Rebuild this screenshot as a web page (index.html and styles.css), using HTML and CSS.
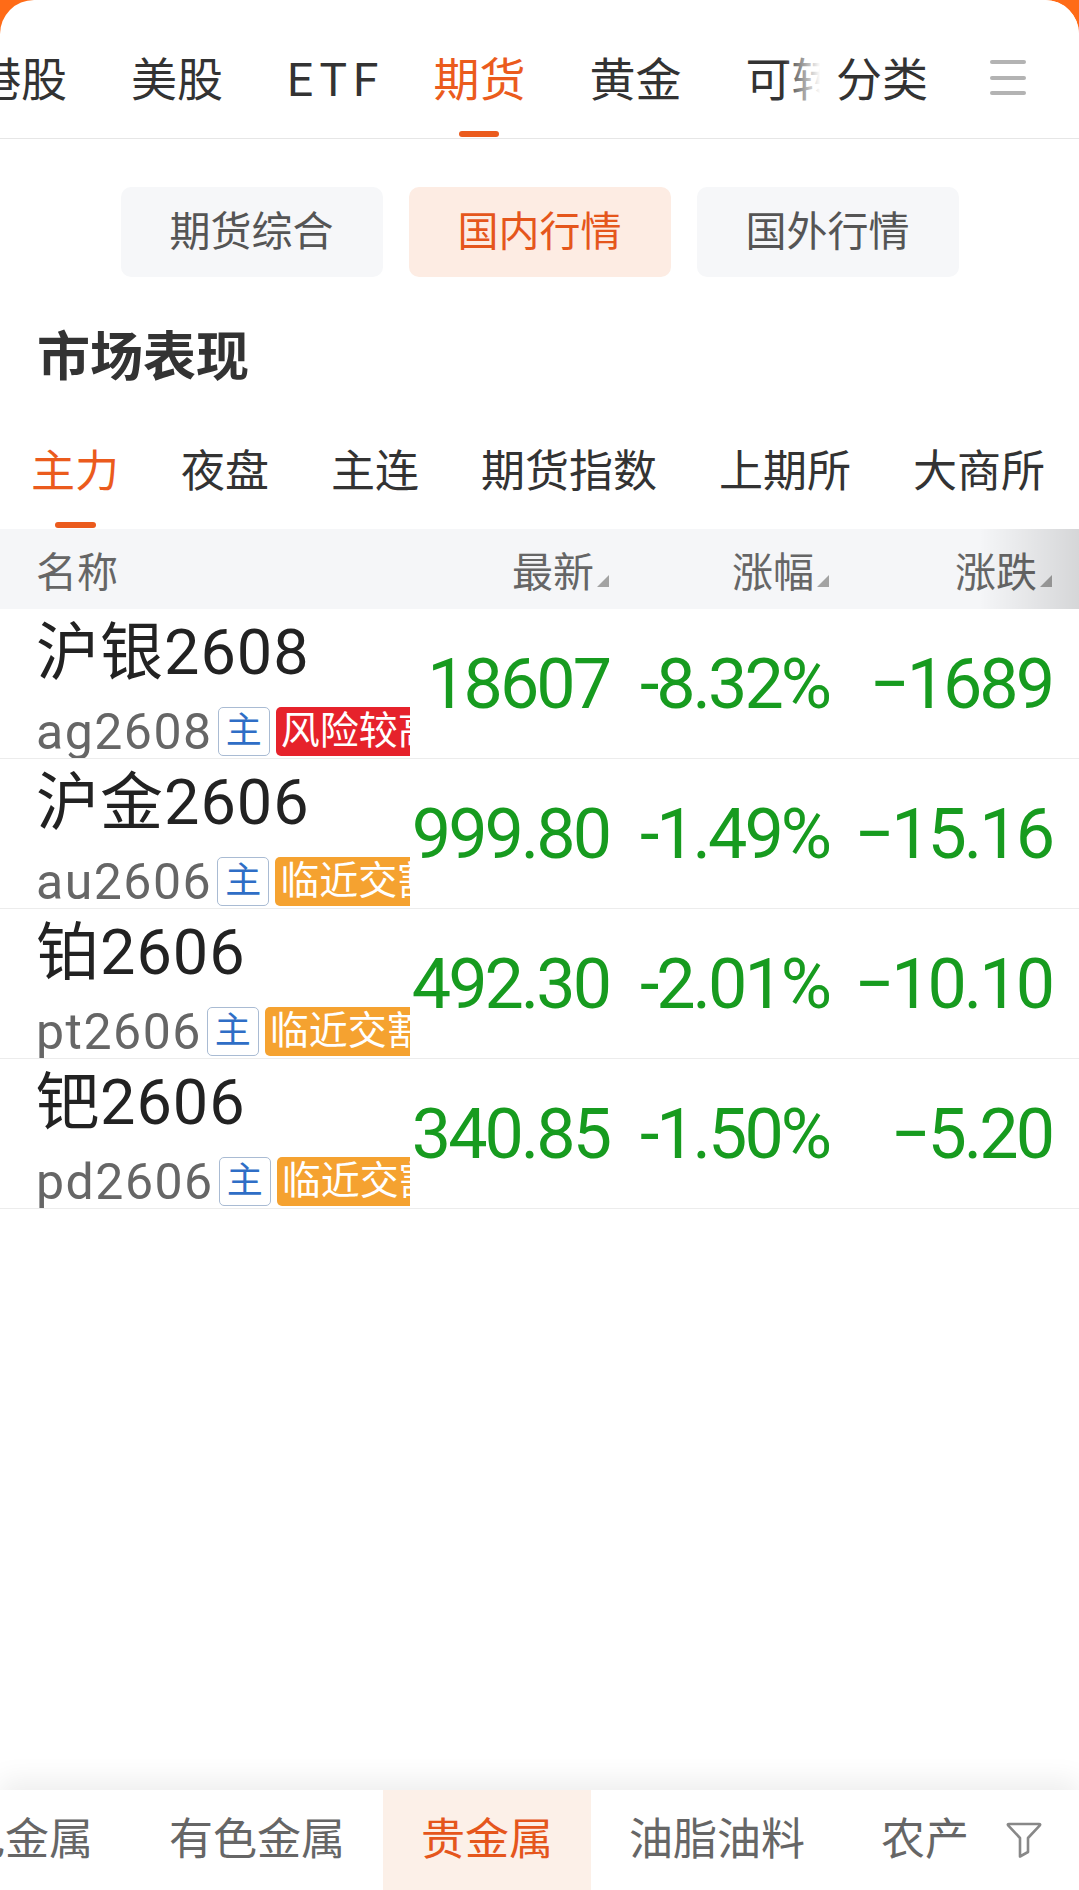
FILE: index.html
```html
<!DOCTYPE html>
<html lang="zh-CN">
<head>
    <meta charset="UTF-8">
    <title>期货 - 国内行情</title>
    <link rel="stylesheet" href="styles.css">
</head>
<body>
<div class="app">
    <!-- 顶部频道 -->
    <div class="topnav">
        <div class="topnav-scroll">
            <ul class="topnav-list">
                <li>港股</li>
                <li>美股</li>
                <li class="latin">ETF</li>
                <li class="on">期货</li>
                <li>黄金</li>
                <li>可转债</li>
                <li>基金</li>
            </ul>
        </div>
        <div class="topnav-more">
            <span>分类</span>
            <i class="menu"><b></b><b></b><b></b></i>
        </div>
    </div>

    <!-- 期货分段 -->
    <div class="seg">
        <span>期货综合</span>
        <span class="on">国内行情</span>
        <span>国外行情</span>
    </div>

    <h2 class="title">市场表现</h2>

    <ul class="subnav">
        <li class="on">主力</li>
        <li>夜盘</li>
        <li>主连</li>
        <li>期货指数</li>
        <li>上期所</li>
        <li>大商所</li>
    </ul>

    <!-- 行情列表 -->
    <div class="table">
        <div class="thead">
            <div class="th-name">名称</div>
            <div class="th">最新<i class="sort"></i></div>
            <div class="th">涨幅<i class="sort"></i></div>
            <div class="th">涨跌<i class="sort"></i></div>
        </div>
        <div class="row">
            <div class="cell-name">
                <div class="name">沪银2608</div>
                <div class="code">ag2608<span class="tag-main">主</span><span class="tag tag-red">风险较高</span></div>
            </div>
            <div class="num">18607</div>
            <div class="num">-8.32%</div>
            <div class="num">−1689</div>
        </div>
        <div class="row">
            <div class="cell-name">
                <div class="name">沪金2606</div>
                <div class="code">au2606<span class="tag-main">主</span><span class="tag tag-orange">临近交割</span></div>
            </div>
            <div class="num">999.80</div>
            <div class="num">-1.49%</div>
            <div class="num">−15.16</div>
        </div>
        <div class="row">
            <div class="cell-name">
                <div class="name">铂2606</div>
                <div class="code">pt2606<span class="tag-main">主</span><span class="tag tag-orange">临近交割</span></div>
            </div>
            <div class="num">492.30</div>
            <div class="num">-2.01%</div>
            <div class="num">−10.10</div>
        </div>
        <div class="row">
            <div class="cell-name">
                <div class="name">钯2606</div>
                <div class="code">pd2606<span class="tag-main">主</span><span class="tag tag-orange">临近交割</span></div>
            </div>
            <div class="num">340.85</div>
            <div class="num">-1.50%</div>
            <div class="num">−5.20</div>
        </div>
    </div>

    <!-- 底部品种分类 -->
    <div class="catbar">
        <div class="catbar-scroll">
            <ul class="catbar-list">
                <li>黑色金属</li>
                <li>有色金属</li>
                <li class="on">贵金属</li>
                <li>油脂油料</li>
                <li>农产品</li>
            </ul>
        </div>
        <div class="catbar-filter">
            <svg width="40" height="40" viewBox="0 0 40 40">
                <path d="M5 4 H35 Q37 4 35.6 5.6 L24 18 V32 L16 36.5 V18 L4.4 5.6 Q3 4 5 4 Z" fill="none" stroke="#888" stroke-width="2.6" stroke-linejoin="round"/>
            </svg>
        </div>
    </div>
</div>
</body>
</html>
```

FILE: styles.css
```css
* {
    margin: 0;
    padding: 0;
    list-style: none;
    box-sizing: border-box;
}

body {
    background: #ff6b17;
    font-family: Roboto, "Noto Sans CJK SC", sans-serif;
    color: #333;
}

.app {
    width: 1079px;
    height: 1890px;
    background: #fff;
    border-radius: 34px 34px 0 0;
    display: flex;
    flex-direction: column;
    overflow: hidden;
}

/* 顶部频道 */
.topnav {
    display: flex;
    height: 139px;
    border-bottom: 1px solid #e6e6e6;
    flex-shrink: 0;
}

.topnav-scroll {
    flex: 1;
    min-width: 0;
    overflow: hidden;
}

.topnav-list {
    display: flex;
    gap: 64px;
    margin-left: -25px;
    white-space: nowrap;
}

.topnav-list li {
    position: relative;
    height: 138px;
    padding-top: 52px;
    font-size: 46px;
    line-height: 56px;
    color: #333;
}

.topnav-list .latin {
    letter-spacing: 6px;
    margin-right: -15px;
}

.topnav-list .on {
    color: #eb5b1d;
}

.topnav-list .on::after {
    content: "";
    position: absolute;
    left: 50%;
    bottom: 1px;
    width: 40px;
    height: 6px;
    margin-left: -20px;
    border-radius: 3px;
    background: #eb5b1d;
}

.topnav-more {
    position: relative;
    width: 243px;
    flex-shrink: 0;
    display: flex;
    align-items: flex-start;
    padding-top: 52px;
    background: #fff;
    font-size: 46px;
    line-height: 56px;
    color: #333;
}

.topnav-more::before {
    content: "";
    position: absolute;
    left: -52px;
    top: 0;
    width: 52px;
    height: 138px;
    background: linear-gradient(to right, rgba(255, 255, 255, 0), #fff 70%);
}

.menu {
    display: flex;
    flex-direction: column;
    gap: 11.5px;
    margin: 8px 0 0 62px;
}

.menu b {
    width: 36px;
    height: 4px;
    border-radius: 2px;
    background: #b3b3b3;
}

/* 分段 */
.seg {
    display: flex;
    justify-content: center;
    gap: 26px;
    margin-top: 48px;
}

.seg span {
    width: 262px;
    height: 90px;
    line-height: 90px;
    text-align: center;
    border-radius: 10px;
    background: #f6f7f9;
    font-size: 41px;
    color: #555;
}

.seg .on {
    background: #fdece3;
    color: #e5561c;
}

.title {
    margin: 46px 0 0 37px;
    font-size: 53px;
    line-height: 70px;
    font-weight: 700;
    color: #333;
}

/* 二级分类 */
.subnav {
    display: flex;
    gap: 62px;
    padding-left: 31px;
    white-space: nowrap;
}

.subnav li {
    position: relative;
    height: 136px;
    padding-top: 50px;
    font-size: 44px;
    line-height: 58px;
    color: #333;
}

.subnav .on {
    color: #eb5b1d;
}

.subnav .on::after {
    content: "";
    position: absolute;
    left: 50%;
    bottom: 1px;
    width: 41px;
    height: 6px;
    margin-left: -20px;
    border-radius: 3px;
    background: #eb5b1d;
}

/* 表格 */
.thead,
.row {
    display: grid;
    grid-template-columns: 374px 199px 220px 223px;
    padding: 0 27px 0 36px;
}

.thead {
    position: relative;
    height: 80px;
    align-items: center;
    background: #f5f6f8;
    font-size: 41px;
    color: #666;
}

.thead::after {
    content: "";
    position: absolute;
    right: 0;
    top: 0;
    width: 100px;
    height: 80px;
    background: linear-gradient(to right, rgba(0, 0, 0, 0), rgba(0, 0, 0, 0.13));
}

.th {
    text-align: right;
}

.sort {
    display: inline-block;
    width: 0;
    height: 0;
    margin-left: 3px;
    border-left: 12px solid transparent;
    border-bottom: 12px solid #a3a3a3;
}

.row {
    height: 150px;
    border-bottom: 1px solid #ececec;
}

.cell-name {
    overflow: hidden;
    padding-top: 8px;
}

.name {
    font-size: 63px;
    line-height: 72px;
    letter-spacing: 1px;
    color: #222;
    white-space: nowrap;
}

.code {
    display: flex;
    align-items: center;
    height: 49px;
    margin-top: 18px;
    font-size: 50px;
    letter-spacing: 1.5px;
    color: #666;
    white-space: nowrap;
}

.tag-main {
    flex-shrink: 0;
    width: 52px;
    height: 49px;
    margin-left: 5px;
    line-height: 46px;
    text-align: center;
    border: 1.5px solid #a9bbd3;
    border-radius: 5px;
    font-size: 36px;
    letter-spacing: 0;
    color: #2f6ec6;
}

.tag {
    flex-shrink: 0;
    height: 49px;
    margin-left: 6px;
    padding: 0 5px;
    line-height: 49px;
    border-radius: 5px;
    font-size: 39px;
    letter-spacing: 0;
    color: #fff;
}

.tag-red {
    background: #e6222b;
}

.tag-orange {
    background: #f5a230;
}

.num {
    align-self: center;
    text-align: right;
    font-size: 70px;
    line-height: 1;
    letter-spacing: -3px;
    color: #179b1f;
    white-space: nowrap;
}

/* 底部分类 */
.catbar {
    display: flex;
    height: 100px;
    margin-top: auto;
    background: #fff;
    box-shadow: 0 -10px 26px rgba(0, 0, 0, 0.07);
}

.catbar-scroll {
    flex: 1;
    min-width: 0;
    overflow: hidden;
}

.catbar-list {
    display: flex;
    margin-left: -121px;
    white-space: nowrap;
}

.catbar-list li {
    padding: 0 38px;
    font-size: 44px;
    line-height: 100px;
    color: #666;
}

.catbar-list .on {
    background: #fcf0e8;
    color: #e5561c;
}

.catbar-filter {
    position: relative;
    width: 111px;
    flex-shrink: 0;
    display: flex;
    align-items: center;
    padding-left: 36px;
    background: #fff;
}
```
